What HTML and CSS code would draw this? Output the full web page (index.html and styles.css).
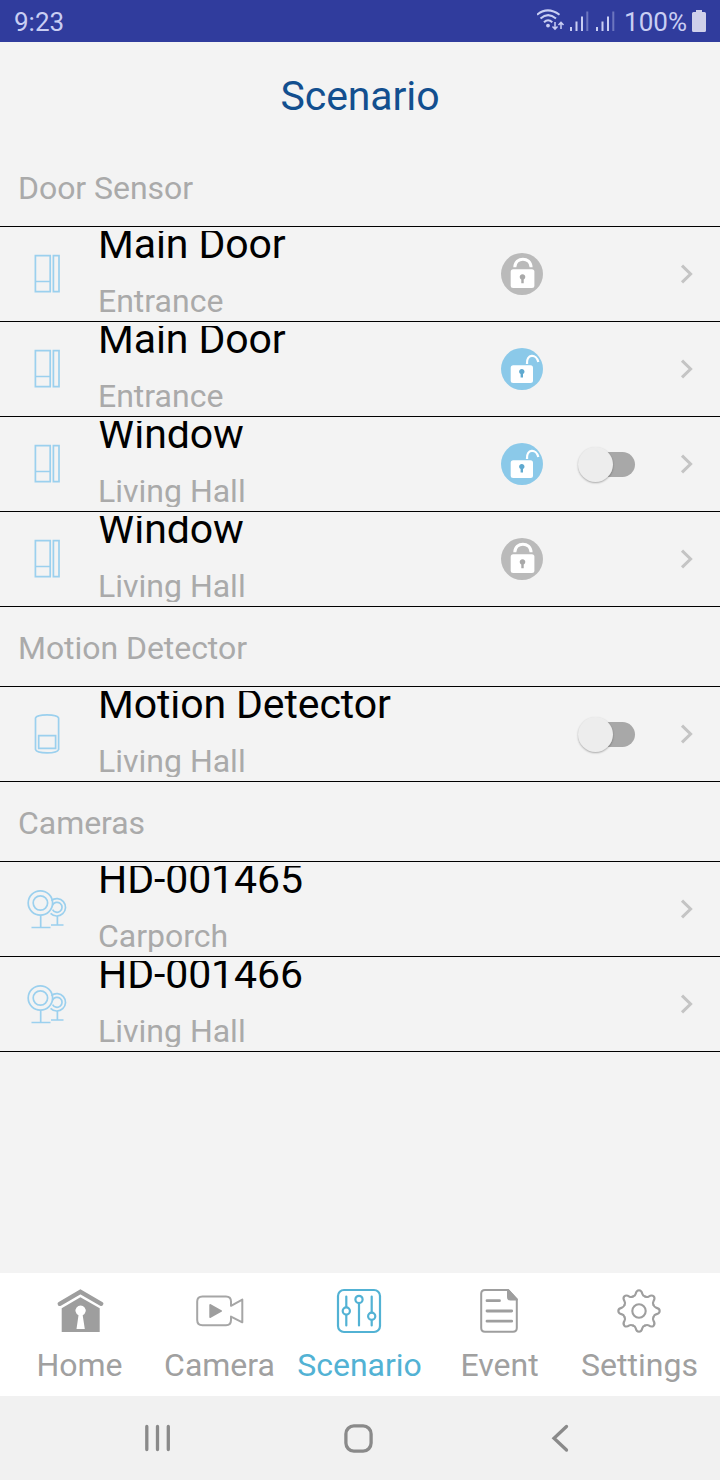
FILE: index.html
```html
<!DOCTYPE html>
<html lang="en">
<head>
    <meta charset="UTF-8">
    <meta name="viewport" content="width=device-width, initial-scale=1.0">
    <title>Scenario</title>
    <link rel="stylesheet" href="styles.css">
</head>
<body>
    <!-- shared icons -->
    <svg class="symbols" width="0" height="0">
        <symbol id="door" viewBox="0 0 44 44">
            <path d="M10.4 3.6h14.8v36H10.4zM10.4 29.5h14.8M28.4 3.6h5.6v36h-5.6z"/>
        </symbol>
        <symbol id="motion" viewBox="0 0 44 44">
            <path d="M10.5 6C12 1.800 32 1.800 33.600 6V37.500C32 42 12 42 10.500 37.500zM13.700 23.700h16.900v12.600H13.700z"/>
        </symbol>
        <symbol id="camera" viewBox="0 0 44 44">
            <circle cx="15.400" cy="16" r="12.200"/>
            <circle cx="15.400" cy="16" r="7.200"/>
            <path d="M26.300 13.600A8.700 8.700 0 1 1 25.600 26.400"/>
            <path d="M27.600 18a5 5 0 1 1 0 4.600"/>
            <path d="M15.700 28.500v12M6.500 40.500h19M32.400 29v9M26 38h12.500"/>
        </symbol>
        <symbol id="locked" viewBox="0 0 42 42">
            <circle cx="21" cy="21" r="21" fill="#bababa"/>
            <rect x="9.700" y="16.300" width="23.700" height="18.700" rx="2.500" fill="#fff"/>
            <path d="M13.800 14.300C14 3.400 29.800 3.400 30.100 14.300" fill="none" stroke="#fff" stroke-width="3"/>
            <path d="M20.300 26.500A2.800 2.800 0 1 1 22.700 26.500V30.300H20.300z" fill="#a9a9a9"/>
        </symbol>
        <symbol id="unlocked" viewBox="0 0 42 42">
            <circle cx="21" cy="21" r="21" fill="#8bc9e9"/>
            <rect x="9.700" y="17.300" width="22.300" height="17.700" rx="2.500" fill="#fff"/>
            <path d="M26 16C25.200 5.500 35.500 5.500 37.300 14" fill="none" stroke="#fff" stroke-width="2.300"/>
            <path d="M19.600 26A2.700 2.700 0 1 1 22 26V29.500H19.600z" fill="#5fa9cf"/>
        </symbol>
        <symbol id="chevron" viewBox="0 0 14 20">
            <path d="M2 1.600L10.600 10L2 18.400" fill="none" stroke="#c4c4c4" stroke-width="3"/>
        </symbol>
    </svg>

    <div class="status-bar">
        <span class="time">9:23</span>
        <svg class="signal" width="84" height="42" viewBox="0 0 84 42">
            <g fill="none" stroke="#c9cef3" stroke-width="2">
                <path d="M0 14.800Q10.500 6 22.500 14.800M3.500 18.500Q11 11.800 19 18.500M7 22.300Q11 18.300 15.300 22.300"/>
                <path d="M18 22v7M15.500 26.500l2.500 2.700 2.500-2.700M24 29v-7M21.500 25l2.500-2.700 2.500 2.700" stroke-width="1.500"/>
                <path d="M34 31v-4M39.500 31V21.500M45 31V16.500M60 31v-4M65.500 31V21.500M71 31V16.500"/>
                <path d="M50.300 31V11.500M76.300 31V11.500" opacity=".4"/>
            </g>
            <circle cx="11" cy="25.600" r="1.900" fill="#c9cef3"/>
        </svg>
        <span class="percent">100%</span>
        <svg class="battery" width="14" height="22" viewBox="0 0 14 22">
            <path d="M4 0h6v2h2.500q1.500 0 1.500 1.500v17q0 1.500-1.500 1.500h-11q-1.500 0-1.500-1.500v-17q0-1.500 1.500-1.500H4z" fill="#cfd0ea"/>
        </svg>
    </div>

    <header>
        <h1>Scenario</h1>
    </header>

    <main>
        <h2>Door Sensor</h2>
        <div class="row">
            <svg class="device"><use href="#door"/></svg>
            <div class="info"><p class="name">Main Door</p><p class="place">Entrance</p></div>
            <svg class="lock"><use href="#locked"/></svg>
            <svg class="chevron"><use href="#chevron"/></svg>
        </div>
        <div class="row">
            <svg class="device"><use href="#door"/></svg>
            <div class="info"><p class="name">Main Door</p><p class="place">Entrance</p></div>
            <svg class="lock"><use href="#unlocked"/></svg>
            <svg class="chevron"><use href="#chevron"/></svg>
        </div>
        <div class="row">
            <svg class="device"><use href="#door"/></svg>
            <div class="info"><p class="name">Window</p><p class="place">Living Hall</p></div>
            <svg class="lock"><use href="#unlocked"/></svg>
            <div class="toggle"></div>
            <svg class="chevron"><use href="#chevron"/></svg>
        </div>
        <div class="row">
            <svg class="device"><use href="#door"/></svg>
            <div class="info"><p class="name">Window</p><p class="place">Living Hall</p></div>
            <svg class="lock"><use href="#locked"/></svg>
            <svg class="chevron"><use href="#chevron"/></svg>
        </div>

        <h2>Motion Detector</h2>
        <div class="row">
            <svg class="device"><use href="#motion"/></svg>
            <div class="info"><p class="name">Motion Detector</p><p class="place">Living Hall</p></div>
            <div class="toggle"></div>
            <svg class="chevron"><use href="#chevron"/></svg>
        </div>

        <h2>Cameras</h2>
        <div class="row">
            <svg class="device"><use href="#camera"/></svg>
            <div class="info"><p class="name">HD-001465</p><p class="place">Carporch</p></div>
            <svg class="chevron"><use href="#chevron"/></svg>
        </div>
        <div class="row">
            <svg class="device"><use href="#camera"/></svg>
            <div class="info"><p class="name">HD-001466</p><p class="place">Living Hall</p></div>
            <svg class="chevron"><use href="#chevron"/></svg>
        </div>
    </main>

    <nav class="tabs">
        <a href="#">
            <svg width="50" height="48" viewBox="0 0 50 48">
                <path d="M5.800 16.800L26.400 4.800L47.200 16.800" fill="none" stroke="#9e9e9e" stroke-width="4.300" stroke-linecap="round"/>
                <path d="M7.700 21.300L26.400 10.300L45.700 21.300V45H7.700z" fill="#9e9e9e"/>
                <path d="M24.500 28.300A5.100 5.100 0 1 1 28.700 28.300L30.800 42H22.500z" fill="#fff"/>
            </svg>
            <span>Home</span>
        </a>
        <a href="#">
            <svg width="50" height="48" viewBox="0 0 50 48">
                <path d="M37 18.800V14.500Q37 9.500 32 9.500H8.500Q3.200 9.500 3.200 14.500V33Q3.200 38.200 8.500 38.200H32Q37 38.200 37 33V29.600L48.300 35.300V12.600z" fill="none" stroke="#a6a6a6" stroke-width="2" stroke-linejoin="round"/>
                <path d="M16.300 18L27 24L16.300 30z" fill="#9e9e9e" stroke="#9e9e9e" stroke-width="2" stroke-linejoin="round"/>
            </svg>
            <span>Camera</span>
        </a>
        <a href="#" class="active">
            <svg width="50" height="48" viewBox="0 0 50 48">
                <g fill="none" stroke="#52b2d4" stroke-width="2.200" stroke-linecap="round">
                    <rect x="4" y="3" width="42" height="42" rx="6"/>
                    <path d="M12.300 9.500v10.500M12.300 28v10.500M25 16.200v22.300M37.700 9.500v16M37.700 33.500v5"/>
                    <circle cx="12.300" cy="24" r="3.600"/>
                    <circle cx="25" cy="12.400" r="3.600"/>
                    <circle cx="37.700" cy="29.300" r="3.600"/>
                </g>
            </svg>
            <span>Scenario</span>
        </a>
        <a href="#">
            <svg width="50" height="48" viewBox="0 0 50 48">
                <g fill="none" stroke="#9e9e9e" stroke-width="2" stroke-linejoin="round">
                    <path d="M34 3H11Q7.200 3 7.200 6.800V41Q7.200 44.800 11 44.800H39Q42.800 44.800 42.800 41V12.500z"/>
                    <path d="M34 3V10Q34 12.500 36.500 12.500H42.800z" fill="#9e9e9e"/>
                    <path d="M13 13.700h12.500M13 24h24.700M13 34.200h24.700" stroke-width="2.800" stroke-linecap="round"/>
                </g>
            </svg>
            <span>Event</span>
        </a>
        <a href="#">
            <svg width="50" height="48" viewBox="0 0 50 48">
                <g transform="translate(25 24)" fill="none" stroke="#9e9e9e" stroke-width="2.100" stroke-linecap="round">
                    <circle r="6.700"/>
                    <path id="tooth" d="M-6-14.500C-4.600-15-3.700-15.600-3.400-17C-2.900-19.300-2.600-20.700 0-20.700C2.600-20.700 2.900-19.300 3.400-17C3.700-15.600 4.600-15 6-14.500"/>
                    <use href="#tooth" transform="rotate(45)"/>
                    <use href="#tooth" transform="rotate(90)"/>
                    <use href="#tooth" transform="rotate(135)"/>
                    <use href="#tooth" transform="rotate(180)"/>
                    <use href="#tooth" transform="rotate(225)"/>
                    <use href="#tooth" transform="rotate(270)"/>
                    <use href="#tooth" transform="rotate(315)"/>
                </g>
            </svg>
            <span>Settings</span>
        </a>
    </nav>

    <div class="system-nav">
        <svg width="33" height="32" viewBox="0 0 33 32"><path d="M5.800 4.500v23M16.500 4.500v23M27.300 4.500v23"/></svg>
        <svg width="33" height="32" viewBox="0 0 33 32"><rect x="3.900" y="3.900" width="25.200" height="25.200" rx="8"/></svg>
        <svg width="33" height="32" viewBox="0 0 33 32"><path d="M23.500 4.500L11 16.300L23.500 28"/></svg>
    </div>
</body>
</html>
```
FILE: styles.css
```css
* {
    box-sizing: border-box;
}

body {
    font-family: Roboto, "Liberation Sans", sans-serif;
    background-color: #f3f3f3;
    margin: 0;
    height: 1480px;
    display: flex;
    flex-direction: column;
    overflow: hidden;
}

svg {
    display: block;
}

.symbols {
    position: absolute;
}

.status-bar {
    height: 42px;
    flex: none;
    background-color: #303c9d;
    color: #c9cef3;
    display: flex;
    align-items: center;
    padding: 0 14px;
    font-size: 26px;
    line-height: 42px;
}

.status-bar span {
    padding-top: 2px;
}

.status-bar .signal {
    margin-left: auto;
}

.status-bar .percent {
    margin: 0 5px 0 3px;
}

header {
    height: 105px;
    flex: none;
    padding-top: 30px;
}

h1 {
    margin: 0;
    font-size: 41px;
    font-weight: normal;
    line-height: 49px;
    letter-spacing: -0.1px;
    text-align: center;
    color: #124f8f;
}

main {
    flex: 1;
}

h2 {
    margin: 0;
    height: 80px;
    padding: 2px 18px 0;
    border-bottom: 1px solid #000;
    font-size: 32px;
    font-weight: normal;
    line-height: 78px;
    letter-spacing: -0.05px;
    color: #aaa;
}

.row {
    height: 95px;
    border-bottom: 1px solid #000;
    display: grid;
    grid-template-columns: 98px 403px 42px 136px 1fr;
    grid-template-rows: 94px;
    align-items: center;
}

.device {
    width: 44px;
    height: 44px;
    margin-left: 25px;
    fill: none;
    stroke: #9bd0ee;
    stroke-width: 1.7;
}

/* the text box is shorter than its two lines, so both get clipped */
.info {
    height: 86px;
    overflow: hidden;
}

.info p {
    margin: 0;
}

.name {
    font-size: 41px;
    line-height: 48px;
    letter-spacing: -0.1px;
    color: #000;
}

.info .name {
    margin-top: -11px;
}

.place {
    font-size: 32px;
    line-height: 38px;
    color: #aaa;
}

.info .place {
    margin-top: 14px;
}

.lock {
    grid-column: 3;
    width: 42px;
    height: 42px;
}

.toggle {
    grid-column: 4;
    position: relative;
    width: 50px;
    height: 25px;
    margin-left: 42px;
    border-radius: 13px;
    background-color: #a8a8a8;
}

.toggle::before {
    content: "";
    position: absolute;
    left: -7px;
    top: -5px;
    width: 35px;
    height: 35px;
    border-radius: 50%;
    background-color: #ededed;
    box-shadow: 0 1px 2px rgba(0, 0, 0, 0.3);
}

.chevron {
    grid-column: 5;
    width: 14px;
    height: 20px;
    margin-left: 1px;
}

.tabs {
    height: 123px;
    flex: none;
    background-color: #fff;
    display: grid;
    grid-template-columns: repeat(5, 140px);
    padding: 14px 0 0 9px;
}

.tabs a {
    display: flex;
    flex-direction: column;
    align-items: center;
    gap: 11px;
    font-size: 32px;
    line-height: 38px;
    color: #a0a0a0;
    text-decoration: none;
}

.tabs span {
    padding-left: 1px;
}

.tabs .active {
    color: #52b2d4;
}

.system-nav {
    height: 84px;
    flex: none;
    background-color: #f1f1f1;
    display: grid;
    grid-template-columns: repeat(3, 201px);
    align-items: center;
    justify-items: center;
    padding-left: 57px;
    fill: none;
    stroke: #8a8a8a;
    stroke-width: 3.3;
    stroke-linecap: round;
}
```
